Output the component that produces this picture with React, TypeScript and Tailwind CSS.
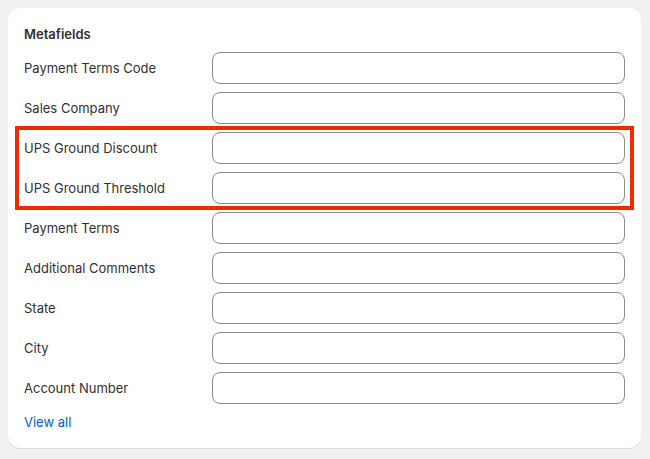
const fields = [
  "Payment Terms Code",
  "Sales Company",
  "UPS Ground Discount",
  "UPS Ground Threshold",
  "Payment Terms",
  "Additional Comments",
  "State",
  "City",
  "Account Number",
];

export default function App() {
  return (
    <div className="min-h-screen bg-[#f1f1f1] p-2 font-['Inter',sans-serif] text-[13px] text-[#303030]">
      <div className="w-[633px] rounded-xl bg-white p-4 shadow-[0_1px_0_0_rgba(26,26,26,0.1)]">
        <div className="h-5 font-semibold leading-5">Metafields</div>
        <div className="relative mt-2 flex flex-col gap-2">
          {fields.map((f) => (
            <div key={f} className="flex items-center">
              <label className="w-[188px] leading-5">{f}</label>
              <input className="h-8 flex-1 rounded-lg border border-[#8a8a8a] bg-white px-3 outline-none" />
            </div>
          ))}
          {/* highlight around the UPS rows */}
          <div className="pointer-events-none absolute left-[-9px] top-[74px] h-[84px] w-[619px] border-4 border-[#f02b00]" />
        </div>
        <div className="mt-2 leading-5">
          <a href="#" className="text-[#005bd3]">
            View all
          </a>
        </div>
      </div>
    </div>
  );
}
